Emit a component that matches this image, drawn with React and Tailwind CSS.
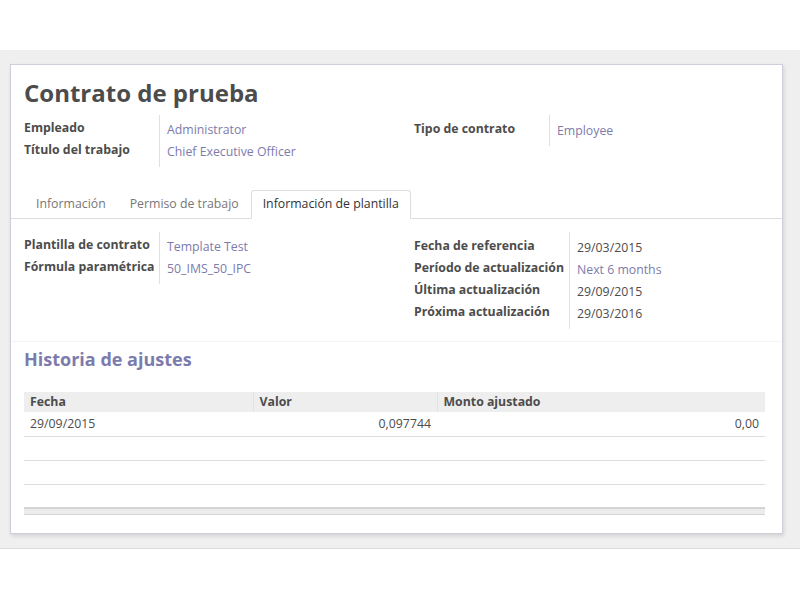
const purple = "text-[#7c7bad]";

const Field = ({ label, value, labelW, link = true }) => (
  <div className="flex h-[22px] items-center">
    <div className="shrink-0 whitespace-nowrap font-bold text-[#4c4c4c]" style={{ width: labelW }}>
      {label}
    </div>
    <div className={`pl-2 pt-[5px] whitespace-nowrap ${link ? purple : "text-[#4c4c4c]"}`}>{value}</div>
  </div>
);

const Group = ({ rows, labelW, className = "" }) => (
  <div className={`relative ${className}`}>
    <div
      className="absolute top-[-2px] bottom-[-6px] w-px bg-[#e0e0e0]"
      style={{ left: labelW }}
    />
    {rows.map((r) => (
      <Field key={r[0]} label={r[0]} value={r[1]} link={r[2] !== false} labelW={labelW} />
    ))}
  </div>
);

export default function App() {
  return (
    <div className="w-[800px] h-[600px] bg-white pt-[50px] font-['Open_Sans',sans-serif] text-[12.3px]">
      <div className="h-[499px] bg-[#efefef] border-b border-[#dcdcdc] pl-[10px] pt-[14px]">
        <div className="w-[773px] h-[470px] bg-white border border-[#cfcfdc] shadow-[1px_2px_4px_rgba(0,0,0,0.12)]">
          {/* header */}
          <div className="px-[13px] pt-[11px]">
            <h1 className="text-[24px] font-bold text-[#4c4c4c] leading-[34px]">
              Contrato de prueba
            </h1>
            <div className="flex items-start mt-[7px]">
              <Group
                className="w-[390px]"
                labelW={135}
                rows={[
                  ["Empleado", "Administrator"],
                  ["Título del trabajo", "Chief Executive Officer"],
                ]}
              />
              <Group
                labelW={135}
                className="pt-[1px]"
                rows={[["Tipo de contrato", "Employee"]]}
              />
            </div>
          </div>

          {/* tabs */}
          <div className="mt-[29px] flex h-[29px] items-end border-b border-[#dddddd] pl-[13px]">
            <div className="px-[12px] h-[28px] flex items-center text-[#777]">Información</div>
            <div className="px-[12px] h-[28px] flex items-center text-[#777]">Permiso de trabajo</div>
            <div className="px-[11px] h-[29px] mb-[-1px] flex items-center text-[#333] bg-white border border-[#dddddd] border-b-white rounded-t-[3px]">
              Información de plantilla
            </div>
          </div>

          {/* template info */}
          <div className="flex items-start px-[13px] pt-[15px] h-[123px] border-b border-[#f4f4f4]">
            <Group
              className="w-[390px]"
              labelW={135}
              rows={[
                ["Plantilla de contrato", "Template Test"],
                ["Fórmula paramétrica", "50_IMS_50_IPC"],
              ]}
            />
            <Group
              labelW={155}
              className="pt-[1px]"
              rows={[
                ["Fecha de referencia", "29/03/2015", false],
                ["Período de actualización", "Next 6 months"],
                ["Última actualización", "29/09/2015", false],
                ["Próxima actualización", "29/03/2016", false],
              ]}
            />
          </div>

          {/* history */}
          <div className="px-[13px]">
            <h2 className={`text-[18px] font-bold ${purple} mt-[4px] leading-[26px]`}>
              Historia de ajustes
            </h2>
            <table className="mt-[20px] w-[741px] border-collapse text-[#4c4c4c]">
              <thead>
                <tr className="bg-[#eeeeee] h-[20px] text-left font-bold">
                  <th className="w-[229px] px-[6px] border-r border-[#e2e2e2]">Fecha</th>
                  <th className="w-[184px] px-[6px] border-r border-[#e2e2e2]">Valor</th>
                  <th className="px-[6px]">Monto ajustado</th>
                </tr>
              </thead>
              <tbody>
                <tr className="h-[24px] border-b border-[#dedede]">
                  <td className="px-[6px]">29/09/2015</td>
                  <td className="px-[6px] text-right">0,097744</td>
                  <td className="px-[6px] text-right">0,00</td>
                </tr>
                <tr className="h-[24px] border-b border-[#dedede]">
                  <td colSpan={3} />
                </tr>
                <tr className="h-[24px] border-b border-[#dedede]">
                  <td colSpan={3} />
                </tr>
                <tr className="h-[24px]">
                  <td colSpan={3} />
                </tr>
              </tbody>
              <tfoot>
                <tr className="h-[6px] bg-[#ececec] border-t-2 border-b border-[#d4d4d4]">
                  <td colSpan={3} />
                </tr>
              </tfoot>
            </table>
          </div>
        </div>
      </div>
    </div>
  );
}
